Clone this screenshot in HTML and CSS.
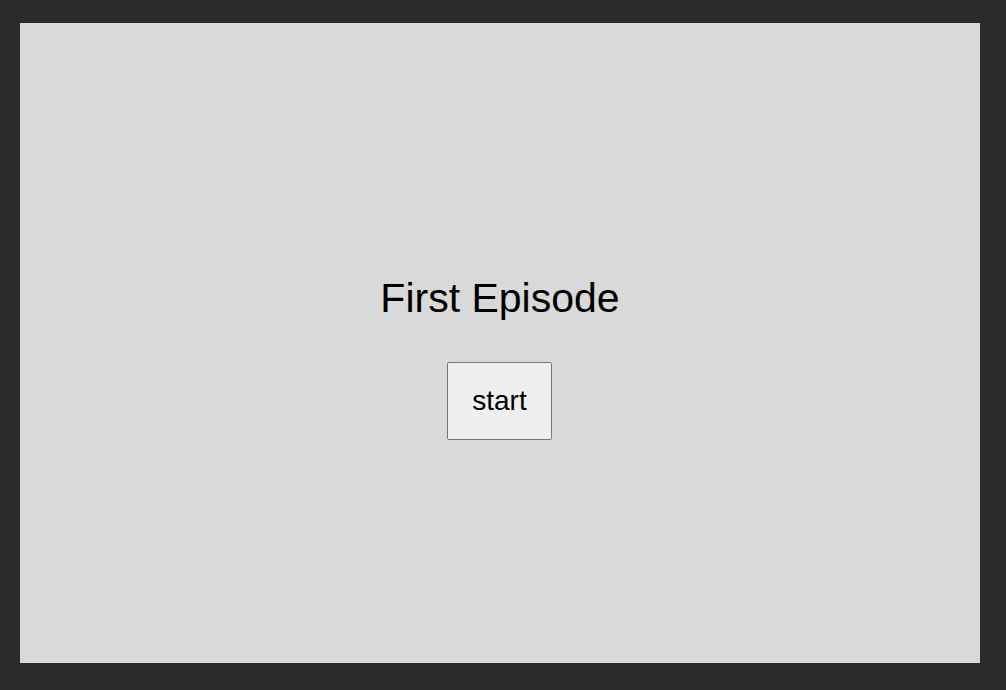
FILE: index.html
```html
<!DOCTYPE html>
<html lang="en">
<head>
<meta charset="utf-8">
<title>First Episode</title>
<link rel="stylesheet" href="styles.css">
</head>
<body>
<main class="stage">
  <h1 class="title">First Episode</h1>
  <button class="start-btn" type="button">start</button>
</main>
</body>
</html>
```

FILE: styles.css
```css
html, body {
  margin: 0;
  height: 100%;
}
body {
  background: #2b2b2b;
  padding: 23px 26px 27px 20px;
  box-sizing: border-box;
  font-family: "Liberation Sans", Arial, sans-serif;
}
.stage {
  width: 960px;
  height: 640px;
  box-sizing: border-box;
  background: #d9d9d9;
  display: flex;
  flex-direction: column;
  align-items: center;
  justify-content: center;
  padding-top: 28px;
}
.title {
  margin: 0 0 40px;
  font-size: 41px;
  line-height: 48px;
  font-weight: normal;
  color: #000;
}
.start-btn {
  width: 105px;
  height: 78px;
  margin-right: 1px;
  box-sizing: border-box;
  border: 1px solid #767676;
  border-radius: 2px;
  background: #efefef;
  font-family: "Liberation Sans", Arial, sans-serif;
  font-size: 28px;
  color: #000;
  padding: 0;
}
```
